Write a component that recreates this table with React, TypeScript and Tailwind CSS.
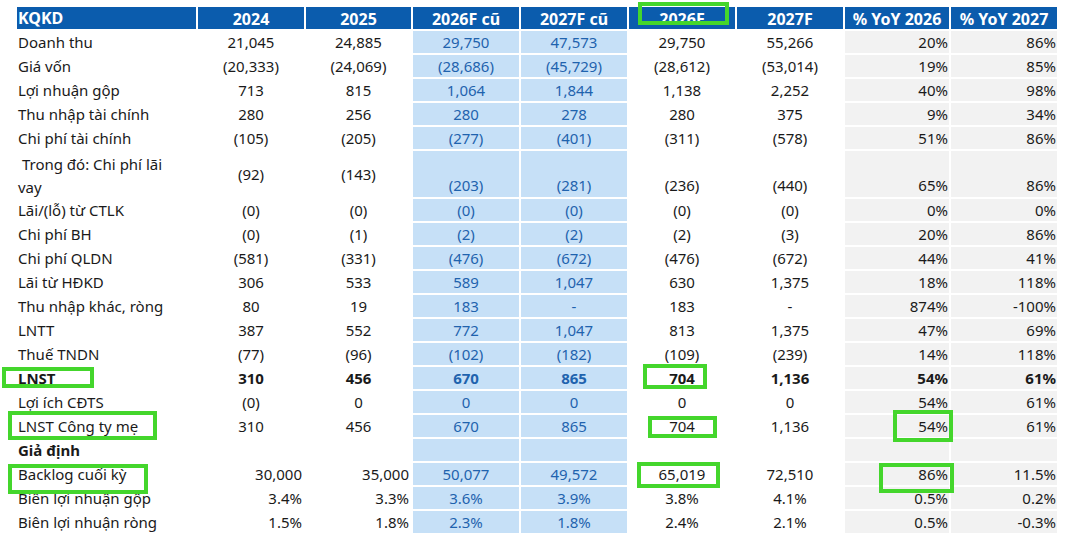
import React from 'react';

type Row = {
  label: string;
  v: string[]; // 2024, 2025, 2026F cũ, 2027F cũ, 2026F, 2027F, yoy26, yoy27
  bold?: boolean;
  tall?: boolean;
  rightHist?: boolean;
  labelBold?: boolean;
};

const rows: Row[] = [
  { label: 'Doanh thu', v: ['21,045', '24,885', '29,750', '47,573', '29,750', '55,266', '20%', '86%'] },
  { label: 'Giá vốn', v: ['(20,333)', '(24,069)', '(28,686)', '(45,729)', '(28,612)', '(53,014)', '19%', '85%'] },
  { label: 'Lợi nhuận gộp', v: ['713', '815', '1,064', '1,844', '1,138', '2,252', '40%', '98%'] },
  { label: 'Thu nhập tài chính', v: ['280', '256', '280', '278', '280', '375', '9%', '34%'] },
  { label: 'Chi phí tài chính', v: ['(105)', '(205)', '(277)', '(401)', '(311)', '(578)', '51%', '86%'] },
  { label: '\u00a0Trong đó: Chi phí lãi vay', tall: true, v: ['(92)', '(143)', '(203)', '(281)', '(236)', '(440)', '65%', '86%'] },
  { label: 'Lãi/(lỗ) từ CTLK', v: ['(0)', '(0)', '(0)', '(0)', '(0)', '(0)', '0%', '0%'] },
  { label: 'Chi phí BH', v: ['(0)', '(1)', '(2)', '(2)', '(2)', '(3)', '20%', '86%'] },
  { label: 'Chi phí QLDN', v: ['(581)', '(331)', '(476)', '(672)', '(476)', '(672)', '44%', '41%'] },
  { label: 'Lãi từ HĐKD', v: ['306', '533', '589', '1,047', '630', '1,375', '18%', '118%'] },
  { label: 'Thu nhập khác, ròng', v: ['80', '19', '183', '-', '183', '-', '874%', '-100%'] },
  { label: 'LNTT', v: ['387', '552', '772', '1,047', '813', '1,375', '47%', '69%'] },
  { label: 'Thuế TNDN', v: ['(77)', '(96)', '(102)', '(182)', '(109)', '(239)', '14%', '118%'] },
  { label: 'LNST', bold: true, v: ['310', '456', '670', '865', '704', '1,136', '54%', '61%'] },
  { label: 'Lợi ích CĐTS', v: ['(0)', '0', '0', '0', '0', '0', '54%', '61%'] },
  { label: 'LNST Công ty mẹ', v: ['310', '456', '670', '865', '704', '1,136', '54%', '61%'] },
  { label: 'Giả định', labelBold: true, v: ['', '', '', '', '', '', '', ''] },
  { label: 'Backlog cuối kỳ', rightHist: true, v: ['30,000', '35,000', '50,077', '49,572', '65,019', '72,510', '86%', '11.5%'] },
  { label: 'Biên lợi nhuận gộp', rightHist: true, v: ['3.4%', '3.3%', '3.6%', '3.9%', '3.8%', '4.1%', '0.5%', '0.2%'] },
  { label: 'Biên lợi nhuận ròng', rightHist: true, v: ['1.5%', '1.8%', '2.3%', '1.8%', '2.4%', '2.1%', '0.5%', '-0.3%'] },
];

const headers = ['2024', '2025', '2026F cũ', '2027F cũ', '2026F', '2027F', '% YoY 2026', '% YoY 2027'];

// green highlight boxes drawn over the table
const marks = [
  { l: 638, t: 2, w: 91, h: 23 },
  { l: 2, t: 367, w: 92, h: 21 },
  { l: 8, t: 411, w: 149, h: 29 },
  { l: 8, t: 464, w: 140, h: 30 },
  { l: 643, t: 364, w: 64, h: 25 },
  { l: 648, t: 416, w: 69, h: 22 },
  { l: 637, t: 462, w: 83, h: 26 },
  { l: 893, t: 410, w: 60, h: 32 },
  { l: 879, t: 463, w: 75, h: 30 },
];

export default function App() {
  return (
    <div
      className="relative w-[1072px] h-[545px] bg-white text-[15px] text-[#1a1a1a] overflow-hidden"
      style={{ fontFamily: '"Noto Sans", "Open Sans", sans-serif' }}
    >
      <div className="pt-[7px] pl-[17px]">
        <div className="grid grid-cols-[179px_106px_105px_106px_106px_106px_106px_104px_106px] gap-x-[2px] gap-y-[2px] auto-rows-[22px]">
          {/* header */}
          <div className="bg-[#0b5cad] text-white font-bold text-[16px] leading-none pl-[1px] pt-[3px]">KQKD</div>
          {headers.map((h) => (
            <div
              key={h}
              className="bg-[#0b5cad] text-white font-bold text-[16px] leading-none flex items-end justify-center pb-[2px]"
            >
              {h}
            </div>
          ))}

          {rows.map((r) => {
            const span = r.tall ? 'row-span-2' : '';
            const weight = r.bold || r.labelBold ? 'font-bold' : '';
            return (
              <React.Fragment key={r.label}>
                {r.tall ? (
                  <div className="row-span-2 pl-[1px] pt-[2px] leading-[23px]">
                    {'\u00a0Trong đó: Chi phí lãi'}
                    <br />
                    vay
                  </div>
                ) : (
                  <div className={`${weight} pl-[1px] leading-[22px]`}>{r.label}</div>
                )}
                {r.v.map((val, i) => {
                  let cls = `${span} ${r.bold ? 'font-bold' : ''} flex leading-none `;
                  if (i < 2) {
                    cls += r.rightHist ? 'justify-end pr-[2px] items-center ' : 'justify-center items-center ';
                  } else if (i < 4) {
                    cls += 'bg-[#c6e0f7] text-[#1f63ae] justify-center ';
                    cls += r.tall ? 'items-end pb-[4px] ' : 'items-center ';
                  } else if (i < 6) {
                    cls += 'justify-center ';
                    cls += r.tall ? 'items-end pb-[4px] ' : 'items-center ';
                  } else {
                    cls += 'bg-[#f2f2f2] justify-end pr-[1px] ';
                    cls += r.tall ? 'items-end pb-[4px] ' : 'items-center ';
                  }
                  return (
                    <div key={i} className={cls}>
                      {val}
                    </div>
                  );
                })}
              </React.Fragment>
            );
          })}
        </div>
      </div>

      {marks.map((m, i) => (
        <div
          key={i}
          className="absolute border-[4px] border-[#44d62c]"
          style={{ left: m.l, top: m.t, width: m.w, height: m.h }}
        />
      ))}
    </div>
  );
}
